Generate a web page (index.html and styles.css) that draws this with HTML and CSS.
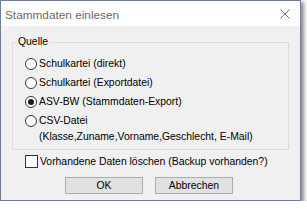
FILE: index.html
```html
<!DOCTYPE html>
<html lang="de">
<head>
<meta charset="utf-8">
<title>Stammdaten einlesen</title>
<link rel="stylesheet" href="styles.css">
</head>
<body>
<div class="window">
  <div class="titlebar">
    <span class="title">Stammdaten einlesen</span>
    <svg class="close" width="10" height="10" viewBox="0 0 10 10"><path d="M0.5 0.5 L9.5 9.5 M9.5 0.5 L0.5 9.5" stroke="#6b6b6b" stroke-width="1" fill="none"/></svg>
  </div>
  <div class="content">
    <fieldset class="group">
      <legend>Quelle</legend>
      <label class="opt"><span class="radio"></span><span>Schulkartei (direkt)</span></label>
      <label class="opt"><span class="radio"></span><span>Schulkartei (Exportdatei)</span></label>
      <label class="opt"><span class="radio checked"></span><span>ASV-BW (Stammdaten-Export)</span></label>
      <label class="opt multi"><span class="radio"></span><span>CSV-Datei<br>(Klasse,Zuname,Vorname,Geschlecht, E-Mail)</span></label>
    </fieldset>
    <label class="check"><span class="box"></span><span>Vorhandene Daten löschen (Backup vorhanden?)</span></label>
    <div class="buttons">
      <button class="btn">OK</button>
      <button class="btn">Abbrechen</button>
    </div>
  </div>
</div>
</body>
</html>
```
FILE: styles.css
```css
html, body {
  margin: 0;
  padding: 0;
  background: #ffffff;
}

body {
  font-family: "Liberation Sans", Arial, sans-serif;
  font-size: 10.4px;
  color: #000;
}

.window {
  box-sizing: border-box;
  width: 301px;
  height: 201px;
  border: 1px solid #6d7d99;
  background: #f0f0f0;
  box-shadow: 2px 3px 4px 1px rgba(0, 0, 0, 0.45);
  display: flex;
  flex-direction: column;
}

.titlebar {
  height: 25px;
  background: #ffffff;
  display: flex;
  align-items: center;
  justify-content: space-between;
  padding: 0 10px 0 4px;
}

.title {
  font-size: 11.8px;
  color: #6a6a6a;
  line-height: 14px;
  padding-top: 2px;
}

.close {
  display: block;
}

.content {
  display: flex;
  flex-direction: column;
}

.group {
  margin: 10px 11px 0 11px;
  padding: 8px 6px 4px 3px;
  border: 1px solid #dcdcdc;
  min-width: 0;
}

.group legend {
  padding: 0 2px;
  line-height: 12px;
}

.opt {
  display: flex;
  align-items: center;
  line-height: 15px;
  padding-left: 9px;
  margin-bottom: 4px;
}

.opt.multi {
  align-items: flex-start;
  line-height: 16px;
  margin-bottom: 0;
}

.radio {
  box-sizing: border-box;
  width: 12px;
  height: 12px;
  border: 1px solid #333;
  border-radius: 50%;
  background: #fff;
  margin-right: 2px;
  flex: none;
  display: flex;
  align-items: center;
  justify-content: center;
}

.opt.multi .radio {
  margin-top: 2px;
}

.radio.checked::after {
  content: "";
  width: 6px;
  height: 6px;
  border-radius: 50%;
  background: #1a1a1a;
}

.check {
  display: flex;
  align-items: center;
  line-height: 15px;
  margin: 4px 0 0 24px;
}

.box {
  box-sizing: border-box;
  width: 13px;
  height: 13px;
  border: 1px solid #333;
  background: #fff;
  margin-right: 2px;
  flex: none;
}

.buttons {
  display: flex;
  gap: 12px;
  margin: 8px 0 0 64px;
}

.btn {
  box-sizing: border-box;
  width: 78px;
  height: 17px;
  padding: 0;
  border: 1px solid #adadad;
  background: #e1e1e1;
  font-family: "Liberation Sans", Arial, sans-serif;
  font-size: 10.4px;
  color: #000;
  line-height: 15px;
}
```
